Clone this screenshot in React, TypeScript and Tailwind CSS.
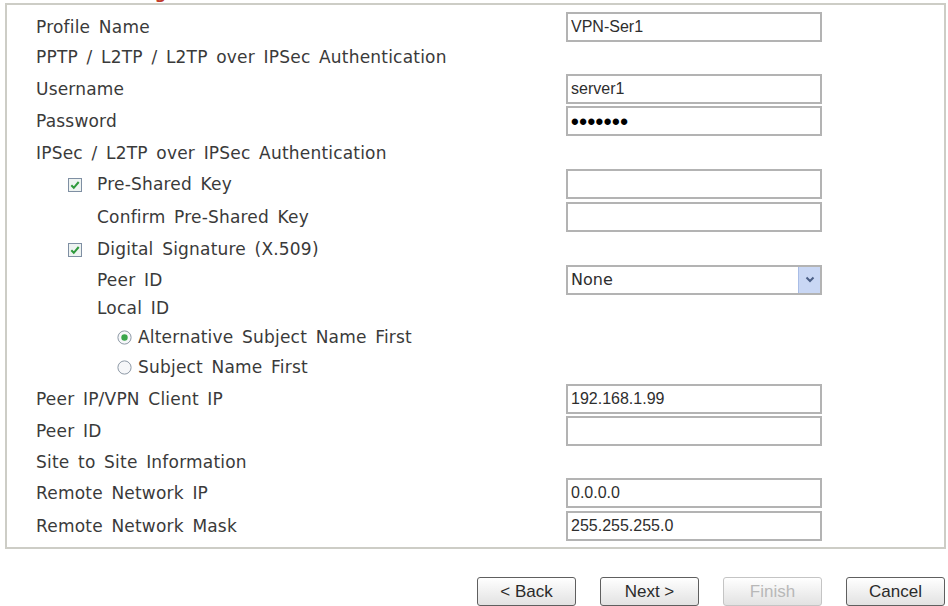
import { ReactElement } from "react"

type RowType = {
    label: string,
    h: number,
    indent?: number,
    kind?: "check" | "radio" | "radioOn",
    field?: "input" | "password" | "select",
    value?: string,
}

const rows: RowType[] = [
    { label: "Profile Name", h: 30, field: "input", value: "VPN-Ser1" },
    { label: "PPTP / L2TP / L2TP over IPSec Authentication", h: 30 },
    { label: "Username", h: 33, field: "input", value: "server1" },
    { label: "Password", h: 32, field: "password", value: "•••••••" },
    { label: "IPSec / L2TP over IPSec Authentication", h: 31 },
    { label: "Pre-Shared Key", h: 32, indent: 1, kind: "check", field: "input", value: "" },
    { label: "Confirm Pre-Shared Key", h: 33, indent: 2, field: "input", value: "" },
    { label: "Digital Signature (X.509)", h: 32, indent: 1, kind: "check" },
    { label: "Peer ID", h: 29, indent: 2, field: "select", value: "None" },
    { label: "Local ID", h: 28, indent: 2 },
    { label: "Alternative Subject Name First", h: 29, indent: 3, kind: "radioOn" },
    { label: "Subject Name First", h: 31, indent: 3, kind: "radio" },
    { label: "Peer IP/VPN Client IP", h: 33, field: "input", value: "192.168.1.99" },
    { label: "Peer ID", h: 32, field: "input", value: "" },
    { label: "Site to Site Information", h: 30 },
    { label: "Remote Network IP", h: 32, field: "input", value: "0.0.0.0" },
    { label: "Remote Network Mask", h: 34, field: "input", value: "255.255.255.0" },
]

const CheckBox = () => (
    <svg width="14" height="14" viewBox="0 0 14 14" className="shrink-0">
        <rect x="0.5" y="0.5" width="13" height="13" fill="#eef3f1" stroke="#7f8fa3" />
        <path d="M3.3 7.2 L5.8 9.8 L10.7 4" fill="none" stroke="#2f9a3c" strokeWidth="2" />
    </svg>
)

const Radio = ({ on }: { on: boolean }) => (
    <svg width="15" height="15" viewBox="0 0 15 15" className="shrink-0">
        <circle cx="7.5" cy="7.5" r="6.6" fill="#f6f7f9" stroke="#8e99a6" />
        {on && <circle cx="7.5" cy="7.5" r="3.2" fill="#3aa54a" />}
    </svg>
)

const fieldBox = "w-[256px] h-[30px] border-2 border-[#b3b3b3] bg-white px-[3px] text-[16px] text-[#2e2e2e] outline-none"

const Field = ({ row }: { row: RowType }): ReactElement | null => {
    if (row.field === "select") {
        return (
            <div className="w-[256px] h-[30px] border-2 border-[#b3b3b3] bg-white flex items-center text-[16px] text-[#2e2e2e]">
                <span className="flex-1 pl-[3px]">{row.value}</span>
                <span className="w-[22px] h-full bg-[#c9d7f4] border-l border-[#a9bde6] flex items-center justify-center">
                    <svg width="10" height="7" viewBox="0 0 10 7">
                        <path d="M1.5 1.5 L5 5 L8.5 1.5" fill="none" stroke="#4b5f86" strokeWidth="2" />
                    </svg>
                </span>
            </div>
        )
    }
    if (row.field === "password") {
        return (
            <input
                readOnly
                value={row.value}
                className={`${fieldBox} !text-[22px] font-bold tracking-[0.5px] !text-black`}
                style={{ fontFamily: '"Liberation Sans", Arial, sans-serif' }}
            />
        )
    }
    if (row.field === "input") {
        return (
            <input
                readOnly
                value={row.value}
                className={fieldBox}
                style={{ fontFamily: '"Liberation Sans", Arial, sans-serif' }}
            />
        )
    }
    return null
}

const indentPad = ["pl-[29px]", "pl-[61px]", "pl-[90px]", "pl-[110px]"]

const FormRow = ({ row }: { row: RowType }) => (
    <div className="flex items-center" style={{ height: row.h }}>
        <div className={`w-[559px] shrink-0 flex items-center pt-[2px] ${indentPad[row.indent ?? 0]}`}>
            {row.kind === "check" && <span className="mr-[15px] flex"><CheckBox /></span>}
            {row.kind === "radio" && <span className="mr-[6px] flex"><Radio on={false} /></span>}
            {row.kind === "radioOn" && <span className="mr-[6px] flex"><Radio on={true} /></span>}
            <span className="tracking-[0.2px] [word-spacing:3px]">{row.label}</span>
        </div>
        <Field row={row} />
    </div>
)

const WizardButton = ({ label, disabled }: { label: string, disabled?: boolean }) => (
    <button
        className={`w-[99px] h-[29px] rounded-[3px] border text-[17px] bg-gradient-to-b from-white to-[#e2e2e2] ${disabled ? "border-[#c4c4c4] text-[#b8b8b8]" : "border-[#5f5f5f] text-[#2a2a2a]"}`}
        style={{ fontFamily: '"Liberation Sans", Arial, sans-serif' }}
    >
        {label}
    </button>
)

const App = () => {
    return (
        <div
            className="w-[948px] h-[606px] bg-white overflow-hidden text-[17px] text-[#3a3a3a]"
            style={{ fontFamily: '"DejaVu Sans", Verdana, sans-serif' }}
        >
            <div className="h-[3px] overflow-hidden pl-[36px]">
                <div className="-mt-[16px] leading-[19px] text-[16px] font-bold text-[#c0392b]">Dial-in Settings</div>
            </div>
            <div className="ml-[5px] w-[941px] border-2 border-[#cdcdc6] pt-[7px] pb-[4px]">
                {rows.map((row, i) => <FormRow key={`row${i}`} row={row} />)}
            </div>
            <div className="mt-[28px] flex justify-end gap-[24px] pr-[3px]">
                <WizardButton label="< Back" />
                <WizardButton label="Next >" />
                <WizardButton label="Finish" disabled />
                <WizardButton label="Cancel" />
            </div>
        </div>
    )
}

export default App
